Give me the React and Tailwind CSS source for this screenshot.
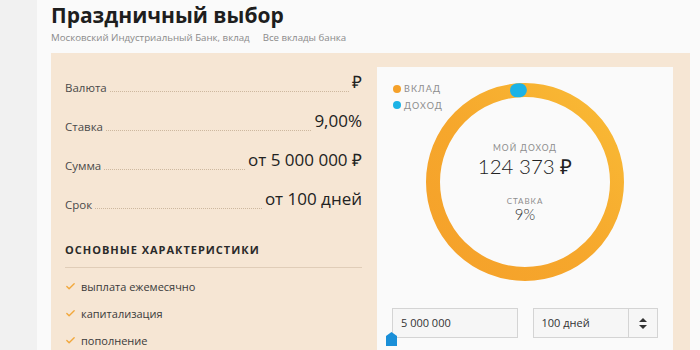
import { Check } from "lucide-react";

const rows = [
  { label: "Валюта", value: "₽" },
  { label: "Ставка", value: "9,00%" },
  { label: "Сумма", value: "от 5 000 000 ₽" },
  { label: "Срок", value: "от 100 дней" },
];

const features = ["выплата ежемесячно", "капитализация", "пополнение"];

const Donut = () => {
  const r = 92;
  const c = 2 * Math.PI * r;
  return (
    <svg width="200" height="200" viewBox="0 0 200 200" className="absolute inset-0">
      <defs>
        <linearGradient id="ring" x1="1" y1="0" x2="0" y2="1">
          <stop offset="0" stopColor="#f9bb36" />
          <stop offset="0.55" stopColor="#f6a72c" />
          <stop offset="1" stopColor="#f5a12a" />
        </linearGradient>
      </defs>
      <circle cx="100" cy="100" r={r} fill="none" stroke="url(#ring)" strokeWidth="14" />
      {/* доход segment at top */}
      <circle
        cx="100"
        cy="100"
        r={r}
        fill="none"
        stroke="#1cb3e6"
        strokeWidth="14"
        strokeLinecap="round"
        strokeDasharray={`3 ${c}`}
        transform="rotate(-95 100 100)"
      />
    </svg>
  );
};

export default function App() {
  return (
    <div className="flex h-[350px] w-[700px] overflow-hidden bg-[#fafafa] font-['Open_Sans',sans-serif]">
      {/* left strip */}
      <div className="w-[37px] shrink-0 bg-[#f1f1f1]" />

      <div className="flex-1 pl-[14px]">
        <h1 className="pt-[2px] text-[21px] font-bold leading-[26px] text-[#1e1e1e]">
          Праздничный выбор
        </h1>
        <div className="mt-[3px] flex gap-[13px] text-[9.7px] leading-[14px] text-[#8a8a8a]">
          <span>Московский Индустриальный Банк, вклад</span>
          <span>Все вклады банка</span>
        </div>

        <div className="mt-[8px] flex w-[639px] gap-[15px] bg-[#f6e6d4] pl-[14px] pr-[17px] pt-[14px]">
          {/* Parameters */}
          <div className="w-[297px] shrink-0">
            <div className="flex flex-col gap-[14px] pt-[3px]">
              {rows.map((row) => (
                <div key={row.label} className="flex h-[25px] items-end">
                  <span className="text-[11.5px] leading-[14px] text-[#4a4a4a]">{row.label}</span>
                  <span className="mx-[3px] mb-[3px] flex-1 border-b border-dotted border-[#cdb89f]" />
                  <span className="mb-[2px] text-[17px] leading-[22px] text-[#222]">{row.value}</span>
                </div>
              ))}
            </div>

            <div className="mt-[30px] border-b border-[#e0cdb8] pb-[8px] text-[11px] font-bold tracking-[0.09em] text-[#2a2a2a]">
              ОСНОВНЫЕ ХАРАКТЕРИСТИКИ
            </div>

            <ul className="mt-[12px] flex flex-col gap-[13px]">
              {features.map((f) => (
                <li key={f} className="flex items-center gap-[5px] text-[11px] leading-[14px] text-[#3a3a3a]">
                  <Check size={11} strokeWidth={3} className="text-[#f2a83c]" />
                  {f}
                </li>
              ))}
            </ul>
          </div>

          {/* Calculator card */}
          <div className="relative h-[300px] w-[296px] bg-[#fafafa] px-[15px]">
            <div className="absolute left-[16px] top-[15px] flex flex-col gap-[3px] text-[9px] font-['Lato',sans-serif] tracking-[0.12em] text-[#8d8d8d]">
              <div className="flex items-center gap-[3px]">
                <span className="h-[8px] w-[8px] rounded-full bg-[#f5a12a]" />
                ВКЛАД
              </div>
              <div className="flex items-center gap-[3px]">
                <span className="h-[8px] w-[8px] rounded-full bg-[#1cb3e6]" />
                ДОХОД
              </div>
            </div>

            <div className="relative mx-auto mt-[15px] h-[200px] w-[200px] font-['Lato',sans-serif]">
              <Donut />
              <div className="absolute inset-0 flex flex-col items-center pt-[60px] text-center">
                <span className="text-[8.5px] tracking-[0.12em] text-[#8d8d8d]">МОЙ ДОХОД</span>
                <span className="mt-[-1px] text-[20.5px] font-light leading-[24px] text-[#222]">124 373 ₽</span>
                <span className="mt-[17px] text-[8px] tracking-[0.12em] text-[#8d8d8d]">СТАВКА</span>
                <span className="mt-[-2px] text-[15px] font-light leading-[18px] text-[#333]">9%</span>
              </div>
            </div>

            <div className="mt-[26px] grid grid-cols-2 gap-[15px]">
              <div className="relative flex h-[30px] items-center border border-[#d4d4d4] bg-[#f6f6f6] pl-[8px] text-[11px] text-[#333]">
                5 000 000
                <svg width="11" height="14" viewBox="0 0 11 14" className="absolute bottom-[-9px] left-[-7px]">
                  <path d="M5.5 0 L11 4 V14 H0 V4 Z" fill="#1a8fd8" />
                </svg>
              </div>
              <div className="flex h-[30px] border border-[#d4d4d4] bg-[#f6f6f6] text-[11px] text-[#333]">
                <span className="flex flex-1 items-center pl-[8px]">100 дней</span>
                <span className="flex w-[29px] items-center justify-center border-l border-[#d4d4d4]">
                  <svg width="8" height="11" viewBox="0 0 8 11">
                    <path d="M4 0 L8 4 H0 Z M0 7 H8 L4 11 Z" fill="#333" />
                  </svg>
                </span>
              </div>
            </div>
          </div>
        </div>
      </div>
    </div>
  );
}
